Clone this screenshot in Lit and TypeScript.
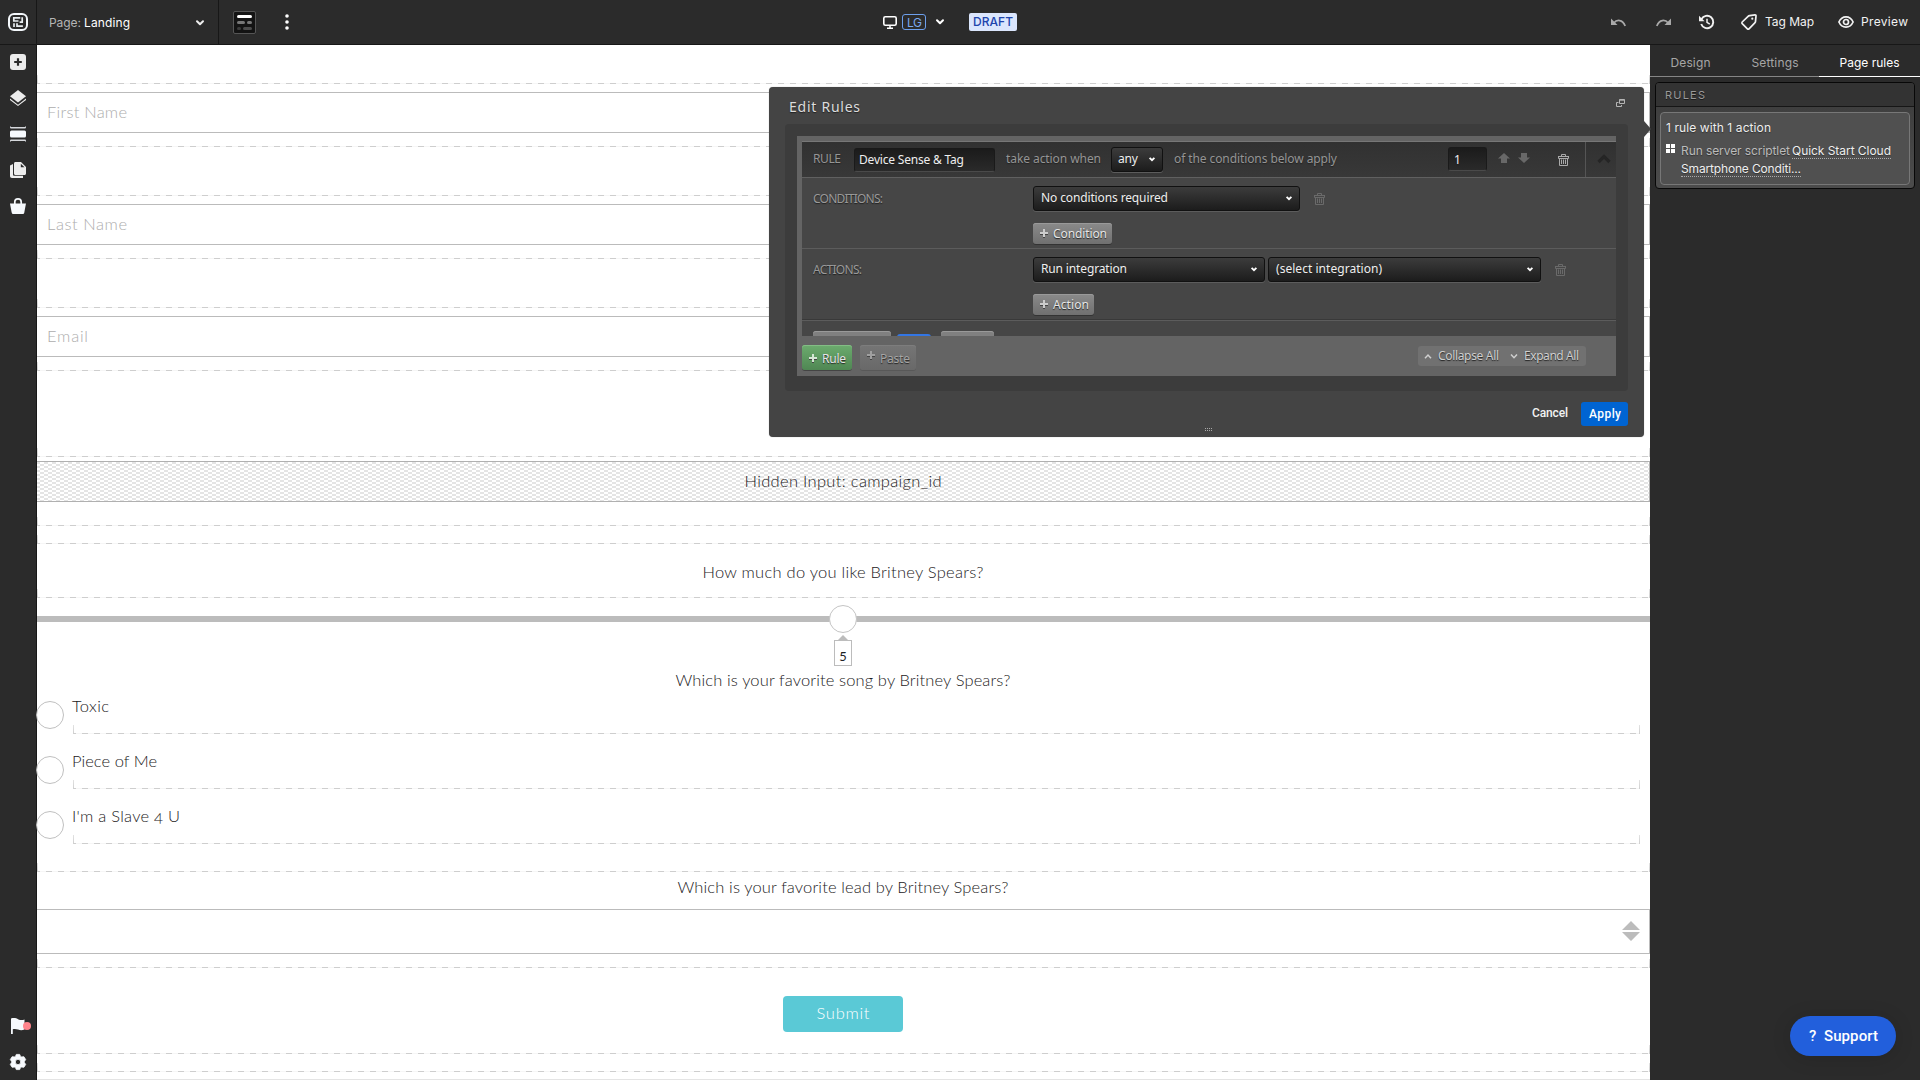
import { LitElement, html, css, svg, nothing } from "lit";
import { customElement, property } from "lit/decorators.js";

/** Single-line label that spreads its letters over a given advance width. */
@customElement("fit-text")
class FitText extends LitElement {
  static styles = css`
    :host { display: inline-block; white-space: pre; flex: none; }
  `;
  @property() text = "";
  @property({ type: Number }) w = 0;

  render() {
    return html`<span>${this.text}</span>`;
  }

  updated() {
    this.style.letterSpacing = "0px";
    this.style.width = `${this.w}px`;
    const span = this.renderRoot.querySelector("span")!;
    const natural = span.getBoundingClientRect().width;
    const gaps = Math.max(1, this.text.length - 1);
    this.style.letterSpacing = `${(this.w - natural) / gaps}px`;
  }
}

const t = (text: string, w: number, cls = "") =>
  html`<fit-text class=${cls} .text=${text} .w=${w}></fit-text>`;

const icon = (w: number, h: number, body: unknown, cls = "", box = `0 0 ${w} ${h}`) =>
  html`<svg class="ic ${cls}" width=${w} height=${h} viewBox=${box}>${body}</svg>`;

const chevron = () =>
  icon(8, 6, svg`<path d="M1 1.200 4 4.200 7 1.200" fill="none" stroke="currentColor" stroke-width="2" stroke-linecap="round" stroke-linejoin="round"/>`);
const caret = () =>
  icon(6, 5, svg`<path d="M.6.8 3 3.200 5.400.8" fill="none" stroke="#fff" stroke-width="1.800"/>`);
const trash = (cls: string) =>
  icon(11, 12, svg`<path d="M3.500 2V.5h4V2M0 2.500h11M1.500 4.500v7h8v-7M3.500 5.500v4.500M5.500 5.500v4.500M7.500 5.500v4.500M.5 2.500v2h10v-2" fill="none" stroke="currentColor"/>`, cls);
const plus = () =>
  icon(8, 8, svg`<path d="M4 0v8M0 4h8" fill="none" stroke="currentColor" stroke-width="2"/>`, "plus");

const logo = icon(20, 18, svg`
  <rect x="1" y="1" width="18" height="16" rx="5" fill="none" stroke="#f4f8fc" stroke-width="2"/>
  <path d="M12.300 4.900H5.800V8H10.500M14.200 4.200V9.200H11.600M6 14V10.200M9 10.200V13.200H14.900" fill="none" stroke="#e8edf0" stroke-width="1.700"/>`);

const railTop = [
  icon(16, 16, svg`<rect width="16" height="16" rx="3" fill="#ececec"/><path d="M8 4.200v7.600M4.200 8h7.600" stroke="#2b2b2b" stroke-width="2.200"/>`),
  icon(16, 16, svg`<path d="M8 0 16 6.200 8 12.400 0 6.200z" fill="#ececec"/><path d="M0 8.600 8 14.800 16 8.600V10L8 16 0 10z" fill="#ececec"/>`),
  icon(16, 16, svg`<rect y="4.500" width="16" height="7" rx="1.500" fill="#f6f9fd"/><path d="M0 0v1.200C0 2 .6 2.500 1.500 2.500h13c.9 0 1.500-.5 1.500-1.300V0l-1 .9H1zM0 16v-1.200c0-.8.6-1.300 1.500-1.300h13c.9 0 1.500.5 1.500 1.300V16l-1-.9H1z" fill="#d6d8dc"/>`),
  icon(16, 16, svg`<path d="M3 2v10.500c0 .8.500 1.300 1.300 1.300H13V16H2c-1.200 0-2-.8-2-2V3.500z" fill="#ececec"/><path d="M5.500 0H11l5 5v6.500c0 .9-.6 1.500-1.500 1.500h-9c-.9 0-1.500-.6-1.500-1.500v-10C4 .6 4.600 0 5.500 0z" fill="#ececec"/><path d="M10.800 1.800v3.500h3.700z" fill="#2b2b2b"/>`),
  icon(16, 16, svg`<path d="M4.800 6V4a3.200 3.200 0 0 1 6.400 0v2" fill="none" stroke="#f6f9fd" stroke-width="1.700"/><path d="M0 5.500h16L14.300 14.500c-.2 1-.8 1.500-1.700 1.500H3.400c-.9 0-1.500-.5-1.700-1.500z" fill="#f6f9fd"/>`),
];

const flag = icon(20, 16, svg`<path d="M0 .6C3-.4 5 .2 7.500 1.400c2 .8 4 .8 6 0v10.200c-2.500 1.100-4.500.9-6.500 0-2-.8-3.500-.8-5.200-.4V16H0z" fill="#f6f9fd"/><circle cx="16" cy="8" r="4" fill="#ff848c"/>`);
const gear = icon(16, 16, svg`<path fill-rule="evenodd" d="M6.300.4h3.400l.8 2 1.200.5 2.200-.2L15.700 5.600l-1.300 1.800v1.200l1.300 1.800-1.800 2.900-2.200-.2-1.200.5-.8 2H6.300l-.8-2-1.200-.5-2.200.2L.3 10.400l1.300-1.800V7.400L.3 5.600l1.800-2.900 2.200.2 1.200-.5zM8 5.300a2.700 2.700 0 1 0 0 5.400 2.700 2.700 0 0 0 0-5.400z" fill="#f6f9fd" stroke="#f6f9fd" stroke-width=".8" stroke-linejoin="round"/>`);

@customElement("app-root")
class AppRoot extends LitElement {
  static styles = css`
    :host { display: block; width: 1920px; height: 1080px; overflow: hidden; position: relative; background: #fff;
      font: 12px/16px Inter, "Liberation Sans", sans-serif; color: #eee; }
    * { box-sizing: border-box; }
    .ic { display: block; flex: none; overflow: visible; }
    .page { display: grid; grid-template: 45px 1035px / 37px 1613px 270px; width: 1920px; height: 1080px; }

    /* top bar */
    .top { grid-column: 1 / 4; display: flex; background: #2b2b2b; border-bottom: 1px solid #171717; }
    .top .cell { display: flex; align-items: center; height: 44px; }
    .brand { width: 37px; padding-left: 8px; border-right: 1px solid #171717; }
    .pagesel { width: 182px; padding: 1px 14px 0 12px; border-right: 1px solid #171717; }
    .muted { color: #b5b5b5; }
    .pagesel .land { margin: 0 auto 0 3px; color: #fff; }
    .tools { width: 664px; padding-left: 14px; gap: 28px; }
    .layoutbtn { width: 23px; height: 23px; background: #131313; border: 1px solid #555; border-radius: 2px; display: grid; place-items: center; }
    .device { width: 86px; color: #fff; }
    .lg { margin: 0 10px 0 5px; width: 24px; height: 16px; border: 1px solid #6d9fec; border-radius: 3px; color: #7ba9f0; line-height: 15px; padding-left: 4px; }
    .draftwrap { width: 642px; }
    .draft { width: 48px; height: 18px; border-radius: 2px; background: #dbe6fd; color: #2044ac; font-weight: 500; line-height: 18px; padding-left: 4px; }
    .actions { color: #f2f2f2; }
    .dim { color: #a9a9a9; }
    .undo { margin-right: 30px; } .redo { margin-right: 28px; } .hist { margin-right: 27px; } .tag { margin-right: 8px; }
    .tagt { margin-right: 24px; } .eye { margin-right: 7px; }

    /* left rail */
    .rail { background: #2b2b2b; border-right: 1px solid #171717; display: flex; flex-direction: column; align-items: flex-start; gap: 20px; padding: 9px 0 10px 10px; }
    .rail .low { margin-top: auto; margin-left: 1px; }

    /* canvas */
    .canvas { display: flex; flex-direction: column; font-family: Lato, "Liberation Sans", sans-serif; font-weight: 300; font-size: 16.5px; line-height: 20px; color: #1c2123; background: #fff; }
    .drop { flex: none; width: 100%; display: flex; justify-content: center; padding-right: 1px;
      background:
        linear-gradient(#e2e2e2, #cfcfcf) 0 100% / 1px 9px no-repeat,
        linear-gradient(#e2e2e2, #cfcfcf) 100% 100% / 1px 9px no-repeat,
        repeating-linear-gradient(90deg, #cecece 0 3px, #f6f6f6 3px 9px, #cecece 9px 12px) 0 100% / 12px 1px repeat-x; }
    .h12 { height: 12px; } .h14 { height: 14px; } .h18 { height: 18px; } .h24 { height: 24px; } .h39 { height: 39px; }
    .h49 { height: 49px; } .h54 { height: 54px; } .h86 { height: 86px; }
    .h54 { padding-top: 18px; }
    .field { flex: none; height: 41px; margin-top: 8px; border: solid #bbb; border-width: 1px 1px 1px 0; padding: 9px 0 0 10px; color: #adadad; }
    .hidden { flex: none; height: 41px; margin-top: 4px; border: solid #b0b0b0; border-width: 1px 1px 1px 0; padding-top: 9px; display: flex; justify-content: center;
      background: conic-gradient(#fff 25%, #e4e4e4 0 50%, #fff 0 75%, #e4e4e4 0) 7px 0 / 8px 4px; }
    .slider { flex: none; height: 69px; display: flex; flex-direction: column; align-items: center; padding: 7px 1px 0 0;
      background: linear-gradient(#bcbcbc, #bcbcbc) 0 18px / 100% 6px no-repeat; }
    .knob { width: 28px; height: 28px; border: 1px solid #c4c4c4; border-radius: 50%; background: #fff; flex: none; }
    .tipup { border: 5px solid transparent; border-top: 0; border-bottom-color: #bcbcbc; margin-top: 2px; }
    .val { width: 18px; height: 26px; border: 1px solid #bcbcbc; font-size: 14px; line-height: 27px; text-align: center; background: #fff; flex: none; font-weight: 400; font-feature-settings: "onum"; }
    .q { flex: none; display: flex; justify-content: center; padding-right: 1px; }
    .q1 { height: 28px; padding-top: 3px; } .q2 { height: 37px; padding-top: 5px; }
    .radio { flex: none; height: 55px; display: flex; padding-right: 10px; }
    .radio .dot { width: 28px; height: 28px; margin: 6px 8px 0 -1px; border: 1px solid #c0c0c0; border-radius: 50%; flex: none; }
    .radio .drop { flex: 1; width: auto; height: 39px; justify-content: flex-start; padding-top: 1px; margin-left: 1px; }
    .radio fit-text { margin-left: -1px; font-feature-settings: "onum"; }
    .pick { flex: none; height: 45px; border: solid #bbb; border-width: 1px 1px 1px 0; display: flex; justify-content: flex-end; padding: 11px 9px 0 0; }
    .submit { margin-top: 28px; width: 120px; height: 36px; border-radius: 4px; background: #5ac9d6; color: #fff; display: flex; justify-content: center; padding-top: 7px; }
    .end { flex: 1; border-bottom: 1px solid #e4e4e4; }

    /* right panel */
    .side { background: #2b2b2b; }
    .tabs { display: flex; height: 32px; color: #a6a6a6; }
    .tab { border-bottom: 1px solid #858585; display: flex; justify-content: center; padding-top: 10px; }
    .tab1 { width: 82px; padding-right: 1px; } .tab2 { width: 87px; padding-right: 1px; } .tab3 { width: 101px; color: #fff; border-color: #fff; }
    .card { margin: 5px; width: 260px; height: 107px; border: 1px solid #080808; border-radius: 4px; overflow: hidden; background: linear-gradient(#3b3b3b, #4c4c4c); }
    .cardhead { height: 24px; background: #333; border-bottom: 1px solid #161616; font-size: 11px; color: #999; text-shadow: 0 1px #1a1a1a; padding: 4px 0 0 9px; }
    .cardbox { margin: 5px 4px; height: 73px; border: 1px solid #777; border-radius: 4px; background: #505050; padding: 7px 0 0 5px; text-shadow: 0 1px 1px #333; display: flex; flex-direction: column; }
    .line { display: flex; height: 16px; }
    .line2 { margin-top: 7px; } .line3 { margin: 2px 0 0 15px; }
    .squares { margin: 1px 6px 0 0; }
    .run { color: #bbb; margin-right: 2px; }
    .dotted { border-bottom: 1px dotted #aaa; }

    /* dialog */
    .dialog { position: absolute; left: 769px; top: 87px; width: 875px; height: 350px; background: #444; border-radius: 4px; padding: 0 16px; display: flex; flex-direction: column;
      font-family: "Noto Sans", "Open Sans", sans-serif; text-shadow: 0 1px 1px #222; box-shadow: 0 0 1px #0006; }
    .pointer { position: absolute; left: 1644px; top: 121px; border: 8px solid transparent; border-left: 7px solid #444; border-right: 0; }
    .title { display: flex; height: 37px; padding: 10px 3px 0 4px; justify-content: space-between; font-size: 14px; line-height: 20px; color: #ddd; }
    .title .ic { margin-top: 2px; }
    .well { height: 267px; background: #3c3c3c; border-radius: 4px; padding: 12px; }
    .frame { width: 819px; height: 240px; background: #646464; padding: 5px 0 0 5px; }
    .list { height: 195px; overflow: hidden; background: #464646; border-top: 1px solid #777; }
    .rhead { height: 36px; display: flex; align-items: flex-start; background: linear-gradient(#313131, #383838); border-bottom: 1px solid #606060; color: #959595; padding-left: 11px; }
    .rhead fit-text { margin-top: 9px; }
    .inp { height: 24px; background: linear-gradient(#1b1b1b, #2a2a2a); border: 1px solid #1a1a1a; border-bottom-color: #4a4a4a; border-radius: 3px; color: #eee; padding-left: 4px; }
    .inp.name { width: 141px; margin: 6px 11px 0 13px; }
    .inp.num { width: 39px; margin: 5px 11px 0 auto; padding-left: 5px; }
    .rhead .inp fit-text { margin-top: 3px; }
    .rhead .inp.num fit-text { margin-top: 4px; }
    .sel { display: flex; justify-content: space-between; height: 25px; border: 1px solid #111; border-radius: 3px; background: linear-gradient(#3c3c3c, #1c1c1c); box-shadow: 0 1px #5c5c5c; color: #eee; padding: 3px 7px 0 7px; flex: none; }
    .rhead .sel fit-text { margin-top: 0; }
    .sel .ic { margin-top: 6px; }
    .any { width: 52px; margin: 5px 11px 0 10px; padding-left: 6px; }
    .none { width: 267px; margin-right: 14px; } .integ { width: 232px; margin-right: 3px; } .pickint { width: 273px; margin-right: 14px; }
    .arr { margin: 11px 8px 0 0; color: #686868; } .arr2 { margin-right: 28px; }
    .rtrash { margin: 12px 16px 0 0; color: #aaa; }
    .coll { width: 31px; height: 35px; border-left: 1px solid #555; padding: 12px 0 0 11px; }
    .sec { display: flex; padding: 8px 0 0 11px; height: 71px; border-bottom: 1px solid #5c5c5c; }
    .acts { height: 72px; box-shadow: inset 0 -1px #393939; }
    .lab { width: 220px; padding-top: 5px; color: #999; flex: none; }
    .stack { display: flex; flex-direction: column; align-items: flex-start; }
    .line25 { display: flex; height: 25px; margin-bottom: 12px; }
    .ltrash { margin-top: 7px; color: #6a6a6a; }
    .btn { display: flex; height: 21px; border-radius: 3px; background: linear-gradient(#8a8a8a, #707070); box-shadow: inset 0 1px #999, 0 1px #333; color: #e6e6e6; padding: 3px 0 0 7px; }
    .plus { margin: 3px 5px 0 0; color: #ccc; filter: drop-shadow(0 1px #444); }
    .cond { width: 79px; } .act { width: 61px; }
    .cut { display: flex; padding: 10px 0 0 11px; }
    .cut i { height: 21px; border-radius: 3px; background: #808080; box-shadow: inset 0 1px #999; }
    .c1 { width: 78px; } .cut .c2 { width: 34px; margin: 3px 10px 0 6px; background: #3376e4; box-shadow: none; } .c3 { width: 53px; }
    .foot { display: flex; padding-top: 9px; }
    .foot .btn { height: 25px; padding-top: 5px; }
    .foot .btn fit-text { margin-top: 1px; }
    .foot .rule { width: 50px; background: linear-gradient(#6cab6e, #4f8753); box-shadow: inset 0 1px #83bd85, 0 1px #444; }
    .foot .rule .plus { margin-top: 4px; color: #d5e6d5; }
    .foot .paste { width: 56px; margin-left: 8px; background: linear-gradient(#757575, #696969); box-shadow: inset 0 1px #7d7d7d, 0 1px #585858; color: #a5a5a5; }
    .foot .paste .plus { margin-top: 1px; color: #a0a0a0; }
    .exp { margin: 1px 30px 0 auto; width: 168px; height: 20px; border-radius: 3px; background: #717171; display: flex; padding: 2px 0 0 6px; color: #cfcfcf; }
    .exp .x1 { margin: 4px 6px 0 0; } .exp .x2 { margin: 4px 6px 0 11px; }
    .btns { display: flex; justify-content: flex-end; margin-top: 11px; height: 24px; font-family: Roboto, sans-serif; font-weight: 500; text-shadow: none; color: #f2f2f2; }
    .cancel { padding: 3px 13px 0 0; }
    .apply { width: 47px; height: 24px; background: #0064d2; border-radius: 3px; padding: 4px 0 0 8px; color: #fff; }
    .grip { margin: 2px 0 0 420px; }
    .support { position: absolute; left: 1790px; top: 1016px; width: 106px; height: 40px; border-radius: 20px; background: #225fdc; color: #fff; font: 500 15px/20px Roboto, sans-serif; display: flex; gap: 7px; padding: 10px 0 0 19px; box-shadow: 0 2px 20px #0002; }
  `;

  renderTop() {
    return html`<header class="top">
      <div class="cell brand">${logo}</div>
      <div class="cell pagesel">${t("Page:", 32, "muted")}${t("Landing", 46, "land")}${chevron()}</div>
      <div class="cell tools">
        <div class="layoutbtn">${icon(15, 15, svg`<rect width="15" height="3" rx="1.500" fill="#fff"/><rect y="6" width="8" height="3" rx="1.500" fill="#777"/><rect x="10" y="6" width="5" height="3" rx="1.500" fill="#777"/><rect y="12" width="4" height="3" rx="1.500" fill="#3c3c3c"/><rect x="6" y="12" width="9" height="3" rx="1.500" fill="#4c4c4c"/>`)}</div>
        ${icon(6, 16, svg`<circle cx="3" cy="2" r="1.800" fill="#fff"/><circle cx="3" cy="8" r="1.800" fill="#fff"/><circle cx="3" cy="14" r="1.800" fill="#fff"/>`)}
      </div>
      <div class="cell device">
        ${icon(14, 13, svg`<rect x=".8" y=".8" width="12.400" height="8.400" rx="1.500" fill="none" stroke="#fff" stroke-width="1.600"/><path d="M7 9v3M4 12.200h6" stroke="#fff" stroke-width="1.500"/>`)}
        <div class="lg">${t("LG", 15)}</div>${chevron()}
      </div>
      <div class="cell draftwrap"><div class="draft">${t("DRAFT", 40)}</div></div>
      <div class="cell actions">
        ${icon(15, 9, svg`<path d="M2.500 5.200C6 1.200 11.500 1.200 14.200 8" fill="none" stroke="currentColor" stroke-width="1.700"/><path d="M0 .5V7h6.500z" fill="currentColor"/>`, "dim undo")}
        ${icon(15, 9, svg`<path d="M12.500 5.200C9 1.200 3.500 1.200.8 8" fill="none" stroke="currentColor" stroke-width="1.700"/><path d="M15 .5V7H8.500z" fill="currentColor"/>`, "dim redo")}
        ${icon(15, 14, svg`<path d="M2.500 4.200A6.200 6.200 0 1 1 2.200 9" fill="none" stroke="currentColor" stroke-width="1.900"/><path d="M0 .8v5.400h5.600z" fill="currentColor"/><path d="M8 3.800v3.600l2.800 1.700" fill="none" stroke="currentColor" stroke-width="1.500"/>`, "hist")}
        ${icon(16, 16, svg`<path d="M8.600 1.600 14 .9c.7 0 1.100.4 1 1.100l-.5 5.400c0 .5-.3 1-.7 1.400L8 14.800c-.5.500-1.100.5-1.600 0L1.200 9.600c-.5-.5-.5-1.100 0-1.600l5.900-5.700c.4-.4.9-.6 1.500-.7z" fill="none" stroke="currentColor" stroke-width="1.700"/><circle cx="11.300" cy="4.700" r="1.100" fill="currentColor"/>`, "tag")}
        ${t("Tag Map", 49, "tagt")}
        ${icon(16, 12, svg`<path d="M.9 6C2.400 2.700 5 .9 8 .9s5.600 1.800 7.100 5.100c-1.500 3.300-4.100 5.100-7.100 5.100S2.400 9.300.9 6z" fill="none" stroke="currentColor" stroke-width="1.700"/><circle cx="8" cy="6" r="2.500" fill="none" stroke="currentColor" stroke-width="1.700"/>`, "eye")}
        ${t("Preview", 47)}
      </div>
    </header>`;
  }

  renderCanvas() {
    const field = (name: string, w: number) => html`<div class="field">${t(name, w)}</div>`;
    const drop = (h: number, body: unknown = nothing) => html`<div class="drop h${h}">${body}</div>`;
    const radio = (name: string, w: number) =>
      html`<div class="radio"><span class="dot"></span><div class="drop">${t(name, w)}</div></div>`;
    return html`<main class="canvas">
      ${drop(39)}${field("First Name", 80)}
      ${drop(14)}${drop(49)}${field("Last Name", 80)}
      ${drop(14)}${drop(49)}${field("Email", 41)}
      ${drop(14)}${drop(86)}
      <div class="hidden">${t("Hidden Input: campaign_id", 197)}</div>
      ${drop(24)}${drop(18)}
      ${drop(54, t("How much do you like Britney Spears?", 281))}
      <div class="slider"><span class="knob"></span><span class="tipup"></span><span class="val">5</span></div>
      <div class="q q1">${t("Which is your favorite song by Britney Spears?", 335)}</div>
      ${radio("Toxic", 37)}${radio("Piece of Me", 85)}${radio("I'm a Slave 4 U", 108)}
      ${drop(12)}
      <div class="q q2">${t("Which is your favorite lead by Britney Spears?", 331)}</div>
      <div class="pick">${icon(18, 20, svg`<path d="M9 0l9 9H0zM0 11h18l-9 9z" fill="#bcbcbc"/>`)}</div>
      ${drop(14)}
      ${drop(86, html`<div class="submit">${t("Submit", 53)}</div>`)}
      ${drop(18)}
      <div class="end"></div>
    </main>`;
  }

  renderSide() {
    return html`<aside class="side">
      <nav class="tabs">
        <div class="tab tab1">${t("Design", 40)}</div>
        <div class="tab tab2">${t("Settings", 47)}</div>
        <div class="tab tab3">${t("Page rules", 60)}</div>
      </nav>
      <section class="card">
        <div class="cardhead">${t("RULES", 40)}</div>
        <div class="cardbox">
          <div class="line">${t("1 rule with 1 action", 105)}</div>
          <div class="line line2">
            ${icon(9, 9, svg`<path d="M0 0h4v4H0zM5 0h4v4H5zM0 5h4v4H0zM5 5h4v4H5z" fill="#fff"/>`, "squares")}
            ${t("Run server scriptlet", 109, "run")}${t("Quick Start Cloud", 99, "dotted")}
          </div>
          <div class="line line3">${t("Smartphone Conditi...", 120, "dotted")}</div>
        </div>
      </section>
    </aside>`;
  }

  renderDialog() {
    return html`<section class="dialog">
      <div class="title">${t("Edit Rules", 71)}
        ${icon(9, 8, svg`<path d="M3.500.5h5v4h-5zM3 1.200h6M2.500 3.500h-2v4h5V6" fill="none" stroke="#b5b5b5"/>`)}
      </div>
      <div class="well"><div class="frame">
        <div class="list">
          <div class="rhead">
            ${t("RULE", 28)}
            <div class="inp name">${t("Device Sense & Tag", 105)}</div>
            ${t("take action when", 95)}
            <div class="sel any">${t("any", 20)}${caret()}</div>
            ${t("of the conditions below apply", 163)}
            <div class="inp num">${t("1", 7)}</div>
            ${icon(12, 11, svg`<path d="M6 0l6 5.500H9V10H3V5.500H0z" fill="currentColor"/>`, "arr")}
            ${icon(12, 11, svg`<path d="M6 10l6-5.500H9V0H3v4.500H0z" fill="currentColor"/>`, "arr arr2")}
            ${trash("rtrash")}
            <div class="coll">${icon(14, 9, svg`<path d="M1.500 8 7 2.500 12.500 8" fill="none" stroke="#252525" stroke-width="3.200"/>`)}</div>
          </div>
          <div class="sec">
            <div class="lab">${t("CONDITIONS:", 70)}</div>
            <div class="stack">
              <div class="line25"><div class="sel none">${t("No conditions required", 127)}${caret()}</div>${trash("ltrash")}</div>
              <div class="btn cond">${plus()}${t("Condition", 54)}</div>
            </div>
          </div>
          <div class="sec acts">
            <div class="lab">${t("ACTIONS:", 49)}</div>
            <div class="stack">
              <div class="line25"><div class="sel integ">${t("Run integration", 86)}${caret()}</div><div class="sel pickint">${t("(select integration)", 106)}${caret()}</div>${trash("ltrash")}</div>
              <div class="btn act">${plus()}${t("Action", 36)}</div>
            </div>
          </div>
          <div class="cut"><i class="c1"></i><i class="c2"></i><i class="c3"></i></div>
        </div>
        <div class="foot">
          <div class="btn rule">${plus()}${t("Rule", 24)}</div>
          <div class="btn paste">${plus()}${t("Paste", 30)}</div>
          <div class="exp">
            ${icon(8, 8, svg`<path d="M1 6.200 4 3 7 6.200" fill="none" stroke="#cfcfcf" stroke-width="1.500"/>`, "x1")}${t("Collapse All", 61)}
            ${icon(8, 8, svg`<path d="M1 2.500 4 5.700 7 2.500" fill="none" stroke="#cfcfcf" stroke-width="1.500"/>`, "x2")}${t("Expand All", 55)}
          </div>
        </div>
      </div></div>
      <div class="btns"><div class="cancel">${t("Cancel", 36)}</div><div class="apply">${t("Apply", 32)}</div></div>
      ${icon(8, 3, svg`<path d="M0 .5h8M0 2.500h8" stroke="#aaa" stroke-dasharray="1 1"/>`, "grip")}
    </section>
    <span class="pointer"></span>`;
  }

  render() {
    return html`<div class="page">
        ${this.renderTop()}
        <nav class="rail">${railTop}<span class="low">${flag}</span>${gear}</nav>
        ${this.renderCanvas()}
        ${this.renderSide()}
      </div>
      ${this.renderDialog()}
      <div class="support">${t("?", 8)}${t("Support", 54)}</div>`;
  }
}
